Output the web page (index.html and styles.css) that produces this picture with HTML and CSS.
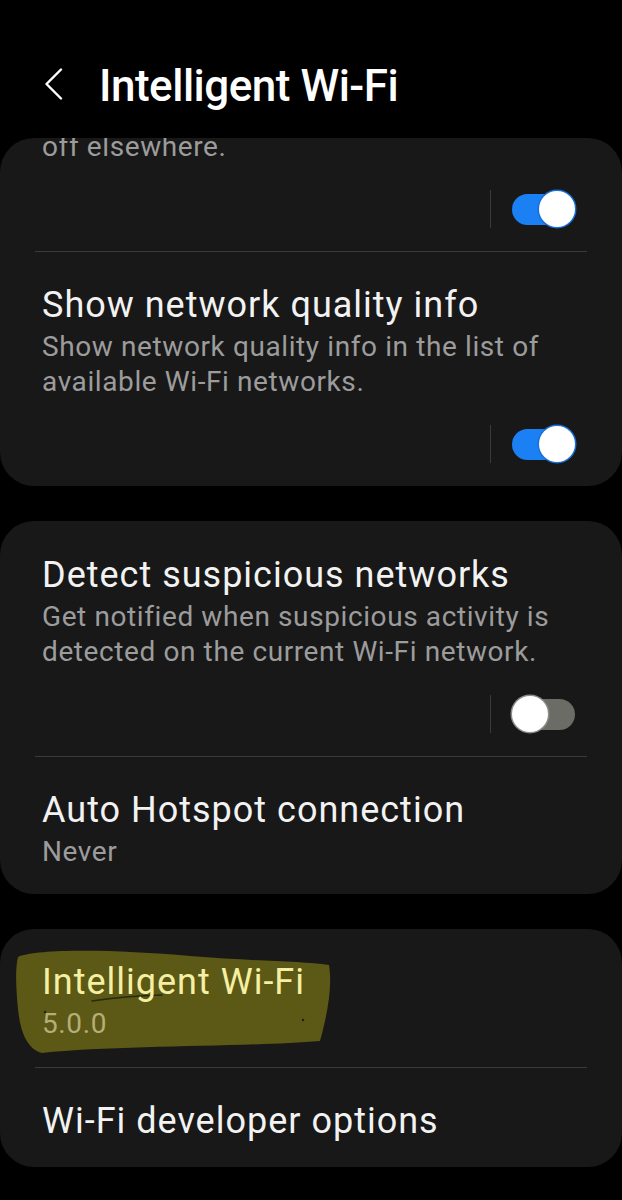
FILE: index.html
```html
<!DOCTYPE html>
<html lang="en">
<head>
<meta charset="utf-8">
<title>Intelligent Wi-Fi</title>
<link rel="stylesheet" href="styles.css">
</head>
<body>
<div class="screen">
  <header class="appbar">
    <svg class="back" width="20" height="32" viewBox="0 0 20 32" aria-hidden="true">
      <path d="M17 1.5 L2.5 16 L17 30.5" fill="none" stroke="#ffffff" stroke-width="2.4" stroke-linecap="round" stroke-linejoin="round"/>
    </svg>
    <h1 class="appbar-title">Intelligent Wi-Fi</h1>
  </header>

  <main class="list">
    <section class="card">
      <div class="item item-cut has-switch">
        <p class="summary">off elsewhere.</p>
        <div class="switch-row">
          <span class="vdiv"></span>
          <span class="switch on"><span class="thumb"></span></span>
        </div>
      </div>
      <div class="divider"></div>
      <div class="item has-switch">
        <p class="title">Show network quality info</p>
        <p class="summary">Show network quality info in the list of available Wi-Fi networks.</p>
        <div class="switch-row">
          <span class="vdiv"></span>
          <span class="switch on"><span class="thumb"></span></span>
        </div>
      </div>
    </section>

    <section class="card">
      <div class="item item-first has-switch">
        <p class="title">Detect suspicious networks</p>
        <p class="summary">Get notified when suspicious activity is detected on the current Wi-Fi network.</p>
        <div class="switch-row">
          <span class="vdiv"></span>
          <span class="switch off"><span class="thumb"></span></span>
        </div>
      </div>
      <div class="divider"></div>
      <div class="item item-last">
        <p class="title">Auto Hotspot connection</p>
        <p class="summary">Never</p>
      </div>
    </section>

    <section class="card card-marked">
      <svg class="marker" width="622" height="140" viewBox="0 0 622 140" aria-hidden="true">
        <path d="M18 28 C40 19 120 21 190 27 C250 32 300 32 329 36 C333 60 326 90 320 112 C250 118 120 116 42 124 C26 120 20 100 18 80 C16 60 15 40 18 28 Z" fill="#5c5815"/>
        <path d="M92 72 Q125 67 162 66" fill="none" stroke="#2a2810" stroke-width="1.6" stroke-linecap="round"/>
        <circle cx="45" cy="83" r="1.2" fill="#22200c"/>
        <circle cx="303" cy="91" r="1.2" fill="#22200c"/>
      </svg>
      <div class="item item-marked">
        <p class="title">Intelligent Wi-Fi</p>
        <p class="summary">5.0.0</p>
      </div>
      <div class="divider"></div>
      <div class="item">
        <p class="title">Wi-Fi developer options</p>
      </div>
    </section>
  </main>
</div>
</body>
</html>
```

FILE: styles.css
```css
* {
  box-sizing: border-box;
}

html, body {
  margin: 0;
  padding: 0;
  background: #000000;
}

body {
  font-family: Roboto, "Noto Sans", "Liberation Sans", sans-serif;
  color: #f2f2f2;
}

.screen {
  width: 622px;
  min-height: 1200px;
  background: #000000;
}

.appbar {
  height: 138px;
  display: flex;
  align-items: flex-start;
  padding: 60px 0 0 44px;
}

.back {
  flex: none;
  margin-top: 8px;
}

.appbar-title {
  margin: 0 0 0 35px;
  font-size: 44px;
  line-height: 52px;
  font-weight: 500;
  letter-spacing: -0.5px;
  color: #ffffff;
}

.list {
  display: flex;
  flex-direction: column;
  gap: 35px;
}

.card {
  position: relative;
  background: #181818;
  border-radius: 34px;
  padding: 0 35px;
  overflow: hidden;
}

.item {
  position: relative;
  padding: 33px 7px 26px;
}

.item.has-switch {
  padding-bottom: 23px;
}

.item-cut {
  margin-top: -46px;
}

.item-first {
  padding-top: 34px;
}

.item-last {
  padding-bottom: 25px;
}

.title {
  margin: 0;
  font-size: 36px;
  line-height: 40px;
  font-weight: 400;
  letter-spacing: 1px;
  color: #f2f2f2;
}

.summary {
  margin: 4px 0 0;
  font-size: 28px;
  line-height: 35px;
  letter-spacing: 0.6px;
  color: #9c9c9c;
}

.switch-row {
  margin-top: 26px;
  height: 38px;
  display: flex;
  align-items: center;
  justify-content: flex-end;
  gap: 21px;
  padding-right: 5px;
}

.vdiv {
  width: 1px;
  height: 38px;
  background: #3a3a3a;
}

.switch {
  width: 63px;
  height: 31px;
  border-radius: 16px;
  display: flex;
  align-items: center;
}

.switch.on {
  background: #1a80f4;
  justify-content: flex-end;
}

.switch.off {
  background: #6c6c66;
  justify-content: flex-start;
}

.thumb {
  flex: none;
  width: 36px;
  height: 36px;
  margin: -3px 0;
  border-radius: 50%;
  background: #ffffff;
}

.switch.on .thumb {
  box-shadow: 0 0 0 1.5px #1670d8;
}

.switch.off .thumb {
  box-shadow: 0 0 0 1.5px #8a8a86;
}

.divider {
  height: 1px;
  background: #3a3a3a;
}

.marker {
  position: absolute;
  left: 0;
  top: 0;
}

.item-marked .title {
  color: #f4efa2;
}

.item-marked .summary {
  color: #b4ae78;
}
```
